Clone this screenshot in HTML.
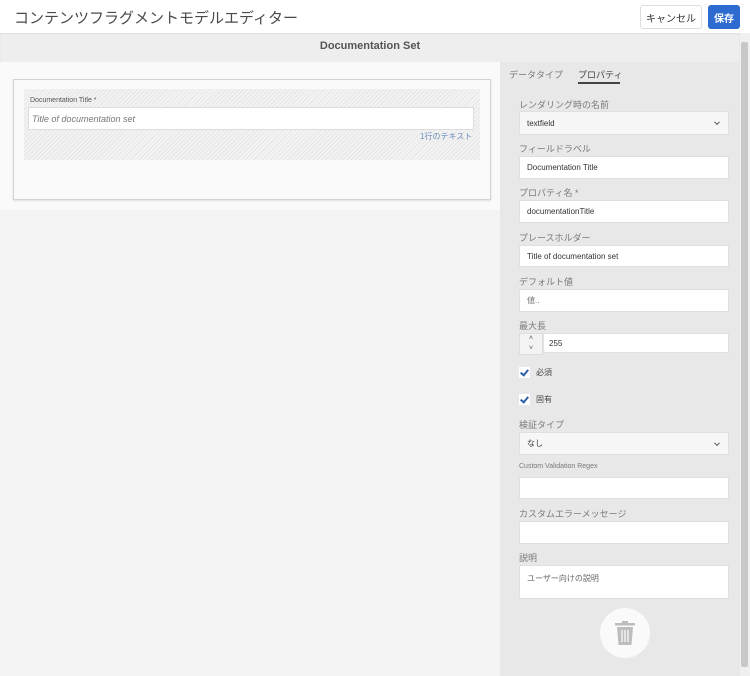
<!DOCTYPE html>
<html><head><meta charset="utf-8"><style>
*{box-sizing:border-box;margin:0;padding:0}
body{width:750px;height:676px;overflow:hidden;background:#f4f4f4;font-family:"Liberation Sans","Noto Sans CJK JP",sans-serif;position:relative;color:#4b4b4b}
.a{position:absolute}
.hdr{left:0;top:0;width:750px;height:33px;background:#fff}
.band{left:0;top:33px;width:740px;height:29px;background:#eeeeee;box-shadow:inset 0 1px 2px rgba(0,0,0,.06)}
.lbl{font-size:9px;color:#7a7a7a;left:519px}
.in{left:519px;width:210px;background:#fff;border:1px solid #e0e0e0;font-size:8px;color:#333;padding-left:7px;display:flex;align-items:center}
.chev{position:absolute;right:9px;top:50%;width:4px;height:4px;border-right:1px solid #555;border-bottom:1px solid #555;transform:translateY(-70%) rotate(45deg)}
.cb{left:519px;width:11px;height:11px;background:#fff}
.cb:after{content:"";position:absolute;left:3px;top:1px;width:3px;height:6px;border-right:2px solid #2d5fa8;border-bottom:2px solid #2d5fa8;transform:rotate(40deg)}
</style></head><body>
<div class="a hdr"></div>
<div class="a" style="left:14px;top:7px;font-size:15px;color:#4a4a4a">コンテンツフラグメントモデルエディター</div>
<div class="a" style="left:640px;top:5px;width:62px;height:24px;border:1px solid #ddd;border-radius:3px;background:#fff;font-size:10px;color:#333;display:flex;align-items:center;justify-content:center">キャンセル</div>
<div class="a" style="left:708px;top:5px;width:32px;height:24px;border-radius:3px;background:#2d6bd0;font-size:10px;font-weight:bold;color:#fff;display:flex;align-items:center;justify-content:center">保存</div>
<div class="a band"></div>
<div class="a" style="left:0;top:40px;width:740px;text-align:center;font-size:11px;color:#555;font-weight:bold">Documentation Set</div>
<div class="a" style="left:740px;top:33px;width:10px;height:643px;background:#f0f0f0"></div>
<div class="a" style="left:741px;top:42px;width:7px;height:625px;background:#c8c8c8;border-radius:2px"></div>
<div class="a" style="left:0;top:62px;width:500px;height:148px;background:#fafafa"></div>
<div class="a" style="left:13px;top:79px;width:478px;height:121px;background:#fafafa;border:1px solid #d4d4d4;box-shadow:0 1px 2px rgba(0,0,0,.1)"></div>
<div class="a" style="left:24px;top:89px;width:456px;height:71px;background:repeating-linear-gradient(135deg,#f3f3f3 0 2px,#e6e6e6 2px 3px)"></div>
<div class="a" style="left:30px;top:97px;font-size:7px;color:#555">Documentation Title *</div>
<div class="a" style="left:28px;top:107px;width:446px;height:23px;background:#fff;border:1px solid #ddd;font-size:9px;font-style:italic;color:#777;padding:6px 0 0 3px">Title of documentation set</div>
<div class="a" style="left:420px;top:131px;font-size:8px;color:#6f8fbf">1行のテキスト</div>
<div class="a" style="left:500px;top:62px;width:240px;height:614px;background:#e8e8e8"></div>
<div class="a" style="left:509px;top:68px;font-size:9px;color:#777">データタイプ</div>
<div class="a" style="left:578px;top:68px;font-size:9px;color:#444;font-weight:normal">プロパティ</div>
<div class="a" style="left:578px;top:82px;width:42px;height:2px;background:#444"></div>
<div class="a lbl" style="top:98px">レンダリング時の名前</div>
<div class="a in" style="top:111px;height:24px;background:#f7f7f7">textfield<span class="chev"></span></div>
<div class="a lbl" style="top:142px">フィールドラベル</div>
<div class="a in" style="top:156px;height:23px">Documentation Title</div>
<div class="a lbl" style="top:186px">プロパティ名 *</div>
<div class="a in" style="top:200px;height:23px">documentationTitle</div>
<div class="a lbl" style="top:231px">プレースホルダー</div>
<div class="a in" style="top:245px;height:22px">Title of documentation set</div>
<div class="a lbl" style="top:275px">デフォルト値</div>
<div class="a in" style="top:289px;height:23px;color:#777">値..</div>
<div class="a lbl" style="top:319px">最大長</div>
<div class="a" style="left:519px;top:333px;width:24px;height:22px;background:#f3f3f3;border:1px solid #ddd;font-size:7px;color:#555;text-align:center;line-height:10px">˄<br>˅</div>
<div class="a in" style="left:543px;top:333px;width:186px;height:20px;padding-left:5px">255</div>
<div class="a cb" style="top:367px"></div><div class="a" style="left:536px;top:367px;font-size:8px;color:#444">必須</div>
<div class="a cb" style="top:394px"></div><div class="a" style="left:536px;top:394px;font-size:8px;color:#444">固有</div>
<div class="a lbl" style="top:418px">検証タイプ</div>
<div class="a in" style="top:432px;height:23px;background:#f7f7f7">なし<span class="chev"></span></div>
<div class="a lbl" style="top:463px;font-size:7px">Custom Validation Regex</div>
<div class="a in" style="top:477px;height:22px"></div>
<div class="a lbl" style="top:507px">カスタムエラーメッセージ</div>
<div class="a in" style="top:521px;height:23px"></div>
<div class="a lbl" style="top:551px">説明</div>
<div class="a in" style="top:565px;height:34px;align-items:flex-start;padding-top:7px;color:#666">ユーザー向けの説明</div>
<div class="a" style="left:600px;top:608px;width:50px;height:50px;border-radius:50%;background:#fafafa"></div>
<svg class="a" style="left:613px;top:620px" width="24" height="26" viewBox="0 0 24 26"><rect x="2" y="3" width="20" height="2.5" fill="#bdbdbd"/><rect x="9" y="1" width="6" height="2.5" fill="#bdbdbd"/><path d="M4 7h16l-1.5 18h-13z" fill="#bdbdbd"/><path d="M9 10v12M12 10v12M15 10v12" stroke="#fafafa" stroke-width="1.3"/></svg>
</body></html>
